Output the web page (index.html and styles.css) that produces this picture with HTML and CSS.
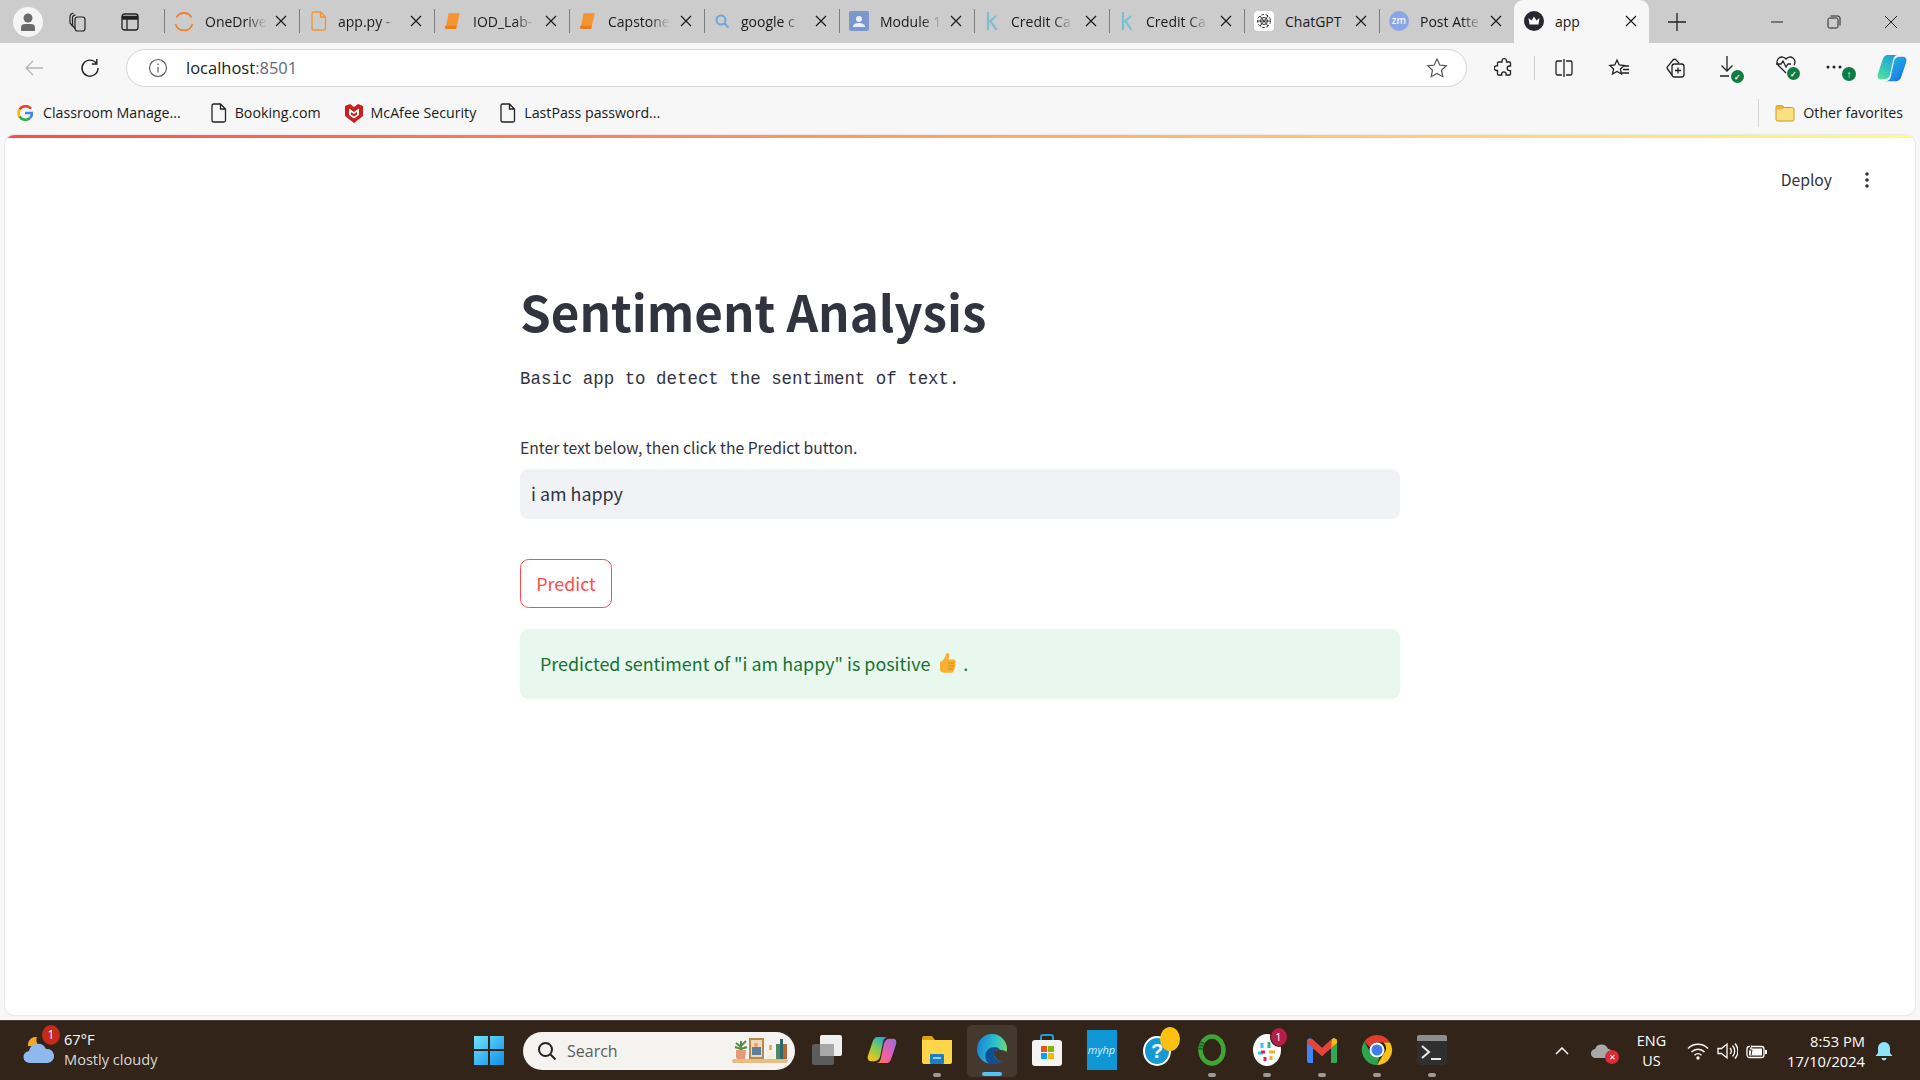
FILE: index.html
```html
<!DOCTYPE html>
<html lang="en">
<head>
    <meta charset="UTF-8">
    <title>app</title>
    <link rel="stylesheet" href="styles.css">
</head>
<body>
<svg class="defs" width="0" height="0">
    <symbol id="close" viewBox="0 0 12 12"><path d="M1 1l10 10M11 1L1 11" stroke="#1a1a1a" stroke-width="1.2" fill="none"/></symbol>
    <symbol id="doc" viewBox="0 0 16 20"><path d="M2.5 1h7l5 5v11.5a1.5 1.5 0 0 1-1.500 1.500h-10.500a1.500 1.500 0 0 1-1.500-1.500v-15a1.500 1.500 0 0 1 1.500-1.500zM9.500 1v5h5" fill="none" stroke="currentColor" stroke-width="1.300"/></symbol>
    <symbol id="book" viewBox="0 0 16 16"><path d="M4 1h10l-2.500 11H2z" fill="#f59331"/><path d="M2 12h9.500l-.6 3H2.500a1.500 1.500 0 0 1-.5-3z" fill="#e47f1d"/></symbol>
    <symbol id="kaggle" viewBox="0 0 16 20"><path d="M4 1v18M4 12l8-7M6.500 10l6 9" fill="none" stroke="#7dbdd0" stroke-width="2.200"/></symbol>
</svg>

<div class="tabstrip">
    <div class="strip_btn strip_profile">
        <span class="profile"><svg width="18" height="20" viewBox="0 0 18 20"><circle cx="9" cy="6" r="4.500" fill="#6a6a6a"/><path d="M2 19v-3a4 4 0 0 1 4-4h6a4 4 0 0 1 4 4v3z" fill="#6a6a6a"/></svg></span>
    </div>
    <div class="strip_btn strip_work">
        <svg width="20" height="20" viewBox="0 0 20 20" fill="none" stroke="#222" stroke-width="1.200"><rect x="8" y="5" width="10" height="14" rx="2.500"/><path d="M8 16.500l-2.500-3V5.500a2.500 2.500 0 0 1 3-2.300M5.500 14l-2.500-3V4.500a3 3 0 0 1 3.500-3"/></svg>
    </div>
    <div class="strip_btn strip_vert">
        <svg width="18" height="18" viewBox="0 0 18 18" fill="none" stroke="#222" stroke-width="1.300"><rect x="1" y="1" width="16" height="16" rx="2.500"/><path d="M1.500 3.500h15v2.500h-15z" fill="#222"/><path d="M6 6v11"/></svg>
    </div>

    <div class="tab">
        <svg class="tab_icon" width="20" height="20" viewBox="0 0 20 20" fill="none" stroke="#f2812d" stroke-width="1.800"><path d="M2.500 6.500A8.500 8.500 0 0 1 17.500 6.500"/><path d="M1.500 13A8.800 8.800 0 0 0 18.500 13"/></svg>
        <span class="tab_title">OneDrive</span>
        <svg class="tab_close"><use href="#close"/></svg>
    </div>
    <div class="tab">
        <svg class="tab_icon orange" width="16" height="20"><use href="#doc"/></svg>
        <span class="tab_title">app.py - </span>
        <svg class="tab_close"><use href="#close"/></svg>
    </div>
    <div class="tab">
        <svg class="tab_icon" width="18" height="18"><use href="#book"/></svg>
        <span class="tab_title">IOD_Lab-</span>
        <svg class="tab_close"><use href="#close"/></svg>
    </div>
    <div class="tab">
        <svg class="tab_icon" width="18" height="18"><use href="#book"/></svg>
        <span class="tab_title">Capstone</span>
        <svg class="tab_close"><use href="#close"/></svg>
    </div>
    <div class="tab">
        <svg class="tab_icon" width="16" height="16" viewBox="0 0 16 16" fill="none" stroke="#6ea6d8" stroke-width="2"><circle cx="7" cy="7" r="4.500"/><path d="M10.500 10.500L14.500 14.500"/></svg>
        <span class="tab_title">google c</span>
        <svg class="tab_close"><use href="#close"/></svg>
    </div>
    <div class="tab">
        <svg class="tab_icon" width="20" height="20" viewBox="0 0 20 20"><rect width="20" height="20" rx="2" fill="#7c97c9"/><circle cx="10" cy="8" r="3" fill="#e8eef8"/><path d="M4 16c0-3 3-4 6-4s6 1 6 4z" fill="#e8eef8"/></svg>
        <span class="tab_title">Module 1</span>
        <svg class="tab_close"><use href="#close"/></svg>
    </div>
    <div class="tab">
        <svg class="tab_icon" width="16" height="20"><use href="#kaggle"/></svg>
        <span class="tab_title">Credit Ca</span>
        <svg class="tab_close"><use href="#close"/></svg>
    </div>
    <div class="tab">
        <svg class="tab_icon" width="16" height="20"><use href="#kaggle"/></svg>
        <span class="tab_title">Credit Ca</span>
        <svg class="tab_close"><use href="#close"/></svg>
    </div>
    <div class="tab">
        <svg class="tab_icon" width="20" height="20" viewBox="0 0 20 20"><rect width="20" height="20" rx="4" fill="#fff"/><g fill="none" stroke="#333" stroke-width="1"><circle cx="10" cy="10" r="6.500" stroke-dasharray="3 1.500"/><circle cx="10" cy="10" r="3.500"/><path d="M6 5l8 10M14 5L6 15M3.500 10h13"/></g></svg>
        <span class="tab_title full">ChatGPT</span>
        <svg class="tab_close"><use href="#close"/></svg>
    </div>
    <div class="tab">
        <span class="zoom_icon">zm</span>
        <span class="tab_title">Post Atte</span>
        <svg class="tab_close"><use href="#close"/></svg>
    </div>
    <div class="tab tab_active">
        <svg class="tab_icon" width="20" height="20" viewBox="0 0 20 20"><circle cx="10" cy="10" r="10" fill="#262730"/><path d="M4.500 7l3 2.500L10 5.500l2.500 4 3-2.500-1 6.500h-9z" fill="#fff"/></svg>
        <span class="tab_title full">app</span>
        <svg class="tab_close"><use href="#close"/></svg>
    </div>
    <div class="new_tab">
        <svg width="18" height="18" viewBox="0 0 18 18"><path d="M9 0v18M0 9h18" stroke="#222" stroke-width="1.300"/></svg>
    </div>
    <div class="win_controls">
        <svg width="14" height="14" viewBox="0 0 14 14"><path d="M1 7h12" stroke="#222" stroke-width="1"/></svg>
        <svg width="14" height="14" viewBox="0 0 14 14" fill="none" stroke="#222"><rect x="1" y="3" width="10" height="10" rx="1.500"/><path d="M3.500 1H11a2 2 0 0 1 2 2v7.500"/></svg>
        <svg width="14" height="14" viewBox="0 0 14 14"><path d="M1 1l12 12M13 1L1 13" stroke="#222" stroke-width="1"/></svg>
    </div>
</div>

<div class="toolbar">
    <div class="nav_btn">
        <svg width="20" height="18" viewBox="0 0 20 18" fill="none" stroke="#b5b5b5" stroke-width="1.300"><path d="M19 9H2M9 2L2 9l7 7"/></svg>
    </div>
    <div class="nav_btn">
        <svg width="20" height="20" viewBox="0 0 20 20" fill="none" stroke="#222" stroke-width="1.400"><path d="M16.500 5.500A8 8 0 1 0 18 10"/><path d="M16.800 1v5h-5"/></svg>
    </div>
    <div class="address">
        <svg class="info" width="20" height="20" viewBox="0 0 20 20" fill="none" stroke="#555" stroke-width="1.100"><circle cx="10" cy="10" r="8.500"/><path d="M10 9v5.500M10 5.500v1.500"/></svg>
        <span class="url">localhost<span class="port">:8501</span></span>
        <svg class="addr_star" width="22" height="22" viewBox="0 0 22 22"><path d="M11 2l2.800 6 6.500.8-4.800 4.400 1.300 6.500L11 16.500l-5.800 3.200 1.300-6.500L1.700 8.800 8.200 8z" fill="none" stroke="#555" stroke-width="1.200"/></svg>
    </div>
    <div class="tools">
        <div class="tool"><svg width="20" height="20" viewBox="0 0 20 20" fill="none" stroke="#222" stroke-width="1.300"><path d="M8 2.500a2.300 2.300 0 0 1 4.500 0V4h3a1 1 0 0 1 1 1v3h-1a2.300 2.300 0 0 0 0 4.600h1v3.400a1 1 0 0 1-1 1h-3.400v-1a2.200 2.200 0 0 0-4.400 0v1H4.500a1 1 0 0 1-1-1v-3.500H2.500a2.300 2.300 0 0 1 0-4.600h1V5a1 1 0 0 1 1-1H8z"/></svg></div>
        <span class="tool_sep"></span>
        <div class="tool"><svg width="20" height="20" viewBox="0 0 20 20" fill="none" stroke="#222" stroke-width="1.300"><path d="M8 3H3.500A1.500 1.500 0 0 0 2 4.500v11A1.500 1.500 0 0 0 3.500 17H8M12 3h4.500A1.500 1.500 0 0 1 18 4.500v11a1.500 1.500 0 0 1-1.500 1.500H12M10 1v18"/></svg></div>
        <div class="tool"><svg width="22" height="20" viewBox="0 0 22 20" fill="none" stroke="#222" stroke-width="1.300"><path d="M9 2l2.200 5 5 .5-3.800 3.400 1.100 5.100L9 13.400 4.500 16l1.100-5.100L1.800 7.500l5-.5zM15 8h6M15 11.500h6M14 15h7"/></svg></div>
        <div class="tool"><svg width="22" height="22" viewBox="0 0 22 22" fill="none" stroke="#222" stroke-width="1.300"><rect x="8" y="7" width="12" height="13" rx="2.500"/><path d="M14 10.500v6M11 13.500h6M8 18l-4.500-6a2 2 0 0 1 .3-2.700L9 3a2 2 0 0 1 3-.1L15 6"/></svg></div>
        <div class="tool">
            <svg class="tool_dl" width="22" height="24" viewBox="0 0 22 24" fill="none" stroke="#222" stroke-width="1.300"><path d="M9 1v15M3.500 10.500L9 16l5.500-5.500M2 21h9"/></svg>
            <span class="ok_badge">&#10003;</span>
        </div>
        <div class="tool">
            <svg class="tool_health" width="22" height="20" viewBox="0 0 22 20" fill="none" stroke="#222" stroke-width="1.300"><path d="M11 18L3 10a5 5 0 0 1 8-6 5 5 0 0 1 8 6M1 9h5l2-3 3 6 2-3h3"/></svg>
            <span class="ok_badge ok_health">&#10003;</span>
        </div>
        <div class="tool">
            <svg class="tool_dots" width="16" height="4" viewBox="0 0 16 4"><circle cx="2" cy="2" r="1.500"/><circle cx="8" cy="2" r="1.500"/><circle cx="14" cy="2" r="1.500"/></svg>
            <span class="ok_badge up">&#8593;</span>
        </div>
        <div class="tool">
            <svg width="30" height="30" viewBox="0 0 32 30"><defs><linearGradient id="cp1" x1="0" y1="0" x2="1" y2="1"><stop offset="0" stop-color="#1ac0d8"/><stop offset="0.600" stop-color="#1f8ee8"/><stop offset="1" stop-color="#1a5fd0"/></linearGradient><linearGradient id="cp2" x1="0.800" y1="0" x2="0.200" y2="1"><stop offset="0" stop-color="#1a9be0"/><stop offset="1" stop-color="#4ce0a0"/></linearGradient></defs><path d="M11 1h12c-4 0-5 2-6 6l-3 15c-1 3-3 5-6 5H4c-3 0-4-3-3-6L6 6c1-3 3-5 5-5z" fill="url(#cp2)"/><path d="M21 29H9c4 0 5-2 6-6l3-15c1-3 3-5 6-5h4c3 0 4 3 3 6l-5 15c-1 3-3 5-5 5z" fill="url(#cp1)"/></svg>
        </div>
    </div>
</div>

<div class="bookmarks">
    <div class="bm">
        <svg width="16" height="16" viewBox="0 0 16 16" fill="none" stroke-width="2.600"><path d="M14 3.800A7 7 0 0 0 2.500 4.500" stroke="#ea4335"/><path d="M2.500 4.500a7 7 0 0 0 0 7" stroke="#fbbc05"/><path d="M2.500 11.500a7 7 0 0 0 10.500 1.500" stroke="#34a853"/><path d="M13 13a7 7 0 0 0 2-5H8" stroke="#4285f4"/></svg>
        <span>Classroom Manage...</span>
    </div>
    <div class="bm">
        <svg class="bm_doc" width="16" height="20"><use href="#doc"/></svg>
        <span>Booking.com</span>
    </div>
    <div class="bm">
        <svg width="18" height="20" viewBox="0 0 18 20"><path d="M0 3l5-2 4 3 4-3 5 2v10l-9 7-9-7z" fill="#c8201f"/><path d="M4 5.500l5 3.500 5-3.500v6.500l-5 3.500-5-3.500z" fill="#fff"/><path d="M6 9l3 2 3-2v2.500l-3 2-3-2z" fill="#c8201f"/></svg>
        <span>McAfee Security</span>
    </div>
    <div class="bm">
        <svg class="bm_doc" width="16" height="20"><use href="#doc"/></svg>
        <span>LastPass password...</span>
    </div>
    <div class="bm bm_other">
        <svg width="20" height="18" viewBox="0 0 20 18"><path d="M1 3a1.500 1.500 0 0 1 1.500-1.500h5l2 2h8A1.500 1.500 0 0 1 19 5v10.500a1.500 1.500 0 0 1-1.500 1.500h-15A1.500 1.500 0 0 1 1 15.500z" fill="#fbdf83" stroke="#c99a1e"/><path d="M1 3a1.500 1.500 0 0 1 1.500-1.500h5l2 2-2 2H1z" fill="#e9b83a"/></svg>
        <span>Other favorites</span>
    </div>
</div>

<div class="page">
    <div class="app_header">
        <span class="deploy">Deploy</span>
        <svg class="kebab" width="4" height="16" viewBox="0 0 4 16"><circle cx="2" cy="2" r="1.800"/><circle cx="2" cy="8" r="1.800"/><circle cx="2" cy="14" r="1.800"/></svg>
    </div>
    <div class="main">
        <h1>Sentiment Analysis</h1>
        <p class="subtitle">Basic app to detect the sentiment of text.</p>
        <label class="field_label">Enter text below, then click the Predict button.</label>
        <div class="text_input">i am happy</div>
        <button class="predict">Predict</button>
        <div class="alert">
            <span>Predicted sentiment of "i am happy" is positive</span>
            <svg class="thumb" width="19" height="22" viewBox="0 0 19 22"><path d="M3 10c3-1 5-4 6-8 .4-1.600 3-1.500 3.300.5.200 1.800-.3 3.500-1 5h5.200c2.600 0 2.800 3.200 1.500 4 1 1 .8 2.700-.3 3.300.6 1.200.1 2.500-1 3 .3 1.500-.7 3-2.500 3H8c-3 0-5-1-5-3z" fill="#fbb034"/><path d="M11 11h6M11 14h6M11 17h5" stroke="#d78a10" stroke-width="1"/></svg>
            <span>.</span>
        </div>
    </div>
</div>

<div class="taskbar">
    <div class="weather">
        <div class="weather_icon">
            <svg width="36" height="36" viewBox="0 0 36 36"><path d="M6 15a8 8 0 0 1 9-9 7 7 0 0 0 5 10z" fill="#f5a623"/><path d="M8 32a6 6 0 0 1-1-12 9 9 0 0 1 17-2 7 7 0 0 1 2 14z" fill="#8fb8ee"/></svg>
            <span class="weather_badge">1</span>
        </div>
        <div class="weather_text">
            <span class="temp">67°F</span>
            <span class="cond">Mostly cloudy</span>
        </div>
    </div>

    <div class="task_center">
        <div class="task_slot">
            <svg width="30" height="30" viewBox="0 0 30 30"><defs><linearGradient id="win" x1="0" y1="0" x2="1" y2="1"><stop offset="0" stop-color="#6fe3fb"/><stop offset="1" stop-color="#0f8fe8"/></linearGradient></defs><path d="M0 1h14v13H0zM16 1h14v13H16zM0 16h14v14H0zM16 16h14v14H16z" fill="url(#win)"/></svg>
        </div>
        <div class="search_pill">
            <svg width="20" height="20" viewBox="0 0 20 20" fill="none" stroke="#222" stroke-width="2"><circle cx="8.500" cy="8.500" r="6.500"/><path d="M13.500 13.500L18.500 18.500"/></svg>
            <span class="search_text">Search</span>
            <svg class="shelf" width="56" height="26" viewBox="0 0 56 26"><rect x="0" y="21" width="56" height="4" rx="2" fill="#e8bd84"/><path d="M4 12h10l-1 9H6a2 2 0 0 1-2-2z" fill="#e59a7a"/><path d="M9 12V3M9 9L4 5M9 8l5-5M9 11L3 9M9 11l6-2" stroke="#4f8f45" stroke-width="2" fill="none"/><rect x="17" y="0" width="15" height="21" fill="#b88a4e"/><rect x="19" y="2" width="11" height="17" fill="#f0d8b8"/><rect x="20" y="9" width="9" height="8" fill="#5c7f9c"/><circle cx="24" cy="7" r="2" fill="#ee9a5a"/><rect x="35" y="13" width="7" height="8" fill="#f7efe0"/><path d="M38.500 7v5" stroke="#f0a030" stroke-width="2.500"/><rect x="44" y="6" width="4" height="15" fill="#4d8a63"/><rect x="48" y="1" width="3" height="20" fill="#2c6a70"/><rect x="51" y="6" width="4" height="15" fill="#b0683a"/></svg>
        </div>
        <div class="task_slot">
            <svg width="32" height="32" viewBox="0 0 32 32"><rect x="1" y="10" width="22" height="21" rx="2" fill="#5c5c5c"/><rect x="9" y="1" width="22" height="21" rx="2" fill="#efefef"/><rect x="9" y="10" width="14" height="12" fill="#a8a8a8"/></svg>
        </div>
        <div class="task_slot">
            <svg width="30" height="28" viewBox="0 0 32 30"><defs><linearGradient id="cp3" x1="0.800" y1="0" x2="0.200" y2="1"><stop offset="0" stop-color="#1aa7e0"/><stop offset="0.500" stop-color="#7ecb5a"/><stop offset="1" stop-color="#f5c518"/></linearGradient><linearGradient id="cp4" x1="1" y1="0" x2="0" y2="1"><stop offset="0" stop-color="#9a6be0"/><stop offset="0.600" stop-color="#ef5fa7"/><stop offset="1" stop-color="#f6893b"/></linearGradient></defs><path d="M11 1h12c-4 0-5 2-6 6l-3 15c-1 3-3 5-6 5H4c-3 0-4-3-3-6L6 6c1-3 3-5 5-5z" fill="url(#cp3)"/><path d="M21 29H9c4 0 5-2 6-6l3-15c1-3 3-5 6-5h4c3 0 4 3 3 6l-5 15c-1 3-3 5-5 5z" fill="url(#cp4)"/></svg>
        </div>
        <div class="task_slot running">
            <svg width="32" height="30" viewBox="0 0 32 30"><path d="M1 3a2 2 0 0 1 2-2h8l3 4H1z" fill="#e0a300"/><path d="M1 5h30v22a2 2 0 0 1-2 2H3a2 2 0 0 1-2-2z" fill="#ffd54a"/><rect x="9" y="19" width="14" height="10" rx="1" fill="#1b7fc4"/><path d="M12 23h8" stroke="#bfe4ff" stroke-width="1.500"/></svg>
        </div>
        <div class="task_slot active">
            <svg width="32" height="32" viewBox="0 0 32 32"><defs><linearGradient id="edge" x1="0" y1="0.300" x2="1" y2="0.500"><stop offset="0" stop-color="#1a7fd8"/><stop offset="0.600" stop-color="#2cc4c8"/><stop offset="1" stop-color="#6edc6a"/></linearGradient></defs><circle cx="16" cy="16" r="15" fill="url(#edge)"/><path d="M18 19c2-3 8-3 13 0-.5 4-2 7-4 9-5 1-10-4-9-9z" fill="#45382e"/><path d="M27 27c-3 3-7 4-11 4l-3-2c4 1 10 1 14-2z" fill="#1a7fd8"/><path d="M13 31C8 27 8 18 14 15c4-2 9-1 10 2-2-1-5 0-6 3-1 4 3 8 8 8-3 2-8 4-13 3z" fill="#0f4f96"/></svg>
        </div>
        <div class="task_slot">
            <svg width="30" height="32" viewBox="0 0 30 32"><path d="M9 6V3a2 2 0 0 1 2-2h8a2 2 0 0 1 2 2v3" fill="none" stroke="#1ba0d8" stroke-width="2"/><rect x="0" y="6" width="30" height="26" rx="3" fill="#f4f4f4"/><rect x="9" y="12" width="6" height="6" fill="#f25022"/><rect x="16" y="12" width="6" height="6" fill="#7fba00"/><rect x="9" y="19" width="6" height="6" fill="#00a4ef"/><rect x="16" y="19" width="6" height="6" fill="#ffb900"/></svg>
        </div>
        <div class="task_slot">
            <span class="myhp">myhp</span>
        </div>
        <div class="task_slot">
            <div class="help_wrap">
                <svg width="30" height="34" viewBox="0 0 30 34"><ellipse cx="15" cy="18" rx="14" ry="15" fill="#fff"/><ellipse cx="15" cy="18" rx="12" ry="13" fill="#159ad6"/><text x="15" y="25" font-size="20" font-weight="700" text-anchor="middle" fill="#fff" font-family="Liberation Sans, sans-serif">?</text></svg>
                <span class="help_dot"></span>
            </div>
        </div>
        <div class="task_slot running_slot">
            <svg width="28" height="32" viewBox="0 0 28 32" fill="none"><ellipse cx="14" cy="16" rx="11.500" ry="13.500" stroke="#3fa535" stroke-width="4.500"/><path d="M5 8a12 14 0 0 0-2 8" stroke="#1a6a2c" stroke-width="4.500" stroke-dasharray="2 1"/></svg>
        </div>
        <div class="task_slot running_slot">
            <div class="help_wrap">
                <svg width="28" height="32" viewBox="0 0 28 32"><ellipse cx="14" cy="16" rx="14" ry="16" fill="#fff"/><path d="M9 9v5M5 19h5" stroke="#36c5f0" stroke-width="3"/><path d="M12 23v4M8 18h4" stroke="#e01e5a" stroke-width="3"/><path d="M16 8v6" stroke="#2eb67d" stroke-width="3"/><path d="M16 18h6M18 22v4" stroke="#ecb22e" stroke-width="3"/></svg>
                <span class="slack_badge">1</span>
            </div>
        </div>
        <div class="task_slot running_slot">
            <svg width="30" height="26" viewBox="0 0 30 26"><path d="M0 4a3 3 0 0 1 5-2l10 9 10-9a3 3 0 0 1 5 2v20a2 2 0 0 1-2 2h-4V11l-9 8-9-8v15H2a2 2 0 0 1-2-2z" fill="#4285f4"/><path d="M24 11l6-5v18a2 2 0 0 1-2 2h-4z" fill="#34a853"/><path d="M5 2l10 9 10-9 5 0v4l-15 13L0 6V4z" fill="#ea4335"/><path d="M25 2a3 3 0 0 1 5 2v2l-6 5z" fill="#fbbc04"/></svg>
        </div>
        <div class="task_slot running_slot">
            <svg width="32" height="32" viewBox="0 0 32 32"><path d="M16 1a15 15 0 0 1 13 7.500H16a7.500 7.500 0 0 0-7 5L3.500 7.500A15 15 0 0 1 16 1z" fill="#e33b2e"/><path d="M29 8.500A15 15 0 0 1 16 31l6.500-11a7.500 7.500 0 0 0 0-11.500z" fill="#fbc116"/><path d="M16 31A15 15 0 0 1 3.500 7.500L9.500 19a7.500 7.500 0 0 0 9 4z" fill="#2ea44f"/><circle cx="16" cy="16" r="7.500" fill="#fff"/><circle cx="16" cy="16" r="5.500" fill="#3f7ee8"/></svg>
        </div>
        <div class="task_slot running_slot">
            <svg width="30" height="30" viewBox="0 0 30 30"><rect width="30" height="30" rx="2" fill="#2f2f2f"/><path d="M0 2a2 2 0 0 1 2-2h26a2 2 0 0 1 2 2v4H0z" fill="#8d8d8d"/><path d="M5 11l7 6-7 6" fill="none" stroke="#e8e8e8" stroke-width="2"/><path d="M14 24h10" stroke="#e8e8e8" stroke-width="2"/></svg>
        </div>
    </div>

    <div class="tray">
        <svg width="14" height="8" viewBox="0 0 14 8" fill="none" stroke="#fff" stroke-width="1.500"><path d="M1 7l6-6 6 6"/></svg>
        <div class="tray_cloud">
            <svg width="22" height="14" viewBox="0 0 22 14"><path d="M5 14a4.500 4.500 0 0 1-1-9 7 7 0 0 1 13 0 4.500 4.500 0 0 1 0 9z" fill="#a9a9a9"/></svg>
            <span class="err_badge">&#10005;</span>
        </div>
        <div class="lang">ENG<br>US</div>
        <svg class="wifi" width="22" height="18" viewBox="0 0 22 18" fill="none" stroke="#fff" stroke-width="1.400"><path d="M1 6.500a14 14 0 0 1 20 0M4.500 10a9 9 0 0 1 13 0M7.500 13.200a5 5 0 0 1 7 0"/><circle cx="11" cy="16" r="1" fill="#fff"/></svg>
        <svg class="volume" width="21" height="18" viewBox="0 0 21 18" fill="none" stroke="#fff" stroke-width="1.300"><path d="M1 6.500h3.500L10 2v14l-5.500-4.500H1zM13 6a4 4 0 0 1 0 6M15.500 3.500a8 8 0 0 1 0 11M18 1.500a11 11 0 0 1 0 15"/></svg>
        <svg class="battery" width="22" height="16" viewBox="0 0 22 16"><rect x="1" y="3.500" width="17" height="11" rx="2.500" fill="none" stroke="#fff" stroke-width="1.300"/><rect x="3" y="5.500" width="13" height="7" fill="#fff"/><rect x="19" y="7" width="2" height="4" fill="#fff"/><path d="M6 0L3 7h3l-1 5" fill="#fff" stroke="#33241a"/></svg>
        <div class="clock">8:53 PM<br>17/10/2024</div>
        <svg class="bell" width="18" height="20" viewBox="0 0 18 20"><path d="M9 1a6 6 0 0 1 6 6v5l2.500 3h-17L3 12V7a6 6 0 0 1 6-6z" fill="#8de4fb"/><path d="M6.500 17a2.500 2.500 0 0 0 5 0z" fill="#8de4fb"/></svg>
    </div>
</div>
</body>
</html>
```

FILE: styles.css
```css
* {
    margin: 0;
    padding: 0;
    box-sizing: border-box;
}

html, body {
    height: 100%;
    overflow: hidden;
}

body {
    display: flex;
    flex-direction: column;
    background-color: #f7f7f7;
    font-family: "Open Sans", "Liberation Sans", sans-serif;
    color: #1a1a1a;
}

.defs {
    position: absolute;
}

/* browser tab strip */
.tabstrip {
    height: 43px;
    flex: none;
    display: flex;
    align-items: stretch;
    background-color: #cccccc;
}

.strip_btn {
    display: flex;
    align-items: center;
    justify-content: center;
    flex: none;
}

.strip_profile {
    width: 56px;
}

.strip_work {
    width: 42px;
}

.strip_vert {
    width: 66px;
    padding-right: 2px;
}

.profile {
    width: 30px;
    height: 30px;
    border-radius: 50%;
    background-color: #f5f5f5;
    display: flex;
    align-items: center;
    justify-content: center;
}

.tab {
    width: 135px;
    flex: none;
    display: flex;
    align-items: center;
    position: relative;
    padding: 0 12px 1px 10px;
    font-size: 14px;
}

.tab::before {
    content: "";
    position: absolute;
    left: 0;
    top: 9px;
    bottom: 10px;
    width: 1px;
    background-color: #7d7d7d;
}

.tab_icon, .zoom_icon {
    flex: none;
    margin-right: 10px;
}

.orange {
    color: #f59331;
    margin-left: 2px;
}

.zoom_icon {
    width: 20px;
    height: 20px;
    border-radius: 50%;
    background-color: #8aa6e6;
    color: #f0f4ff;
    font-size: 10px;
    font-weight: 600;
    text-align: center;
    line-height: 19px;
}

.tab_title {
    flex: 1;
    min-width: 0;
    margin-left: 1px;
    white-space: pre;
    -webkit-mask-image: linear-gradient(to right, #000 42px, transparent 62px);
    mask-image: linear-gradient(to right, #000 42px, transparent 62px);
}

.tab_title.full {
    -webkit-mask-image: none;
    mask-image: none;
}

.tab_close {
    width: 12px;
    height: 12px;
    flex: none;
}

.tab_active {
    background-color: #f7f7f7;
    border-radius: 9px 9px 0 0;
}

.tab_active::before {
    display: none;
}

.new_tab {
    width: 55px;
    display: flex;
    align-items: center;
    justify-content: center;
}

.win_controls {
    margin-left: auto;
    width: 172px;
    padding: 0 22px;
    display: flex;
    align-items: center;
    justify-content: space-between;
}

/* toolbar */
.toolbar {
    height: 49px;
    flex: none;
    display: flex;
    align-items: center;
    padding: 6px 0 5px 6px;
}

.nav_btn {
    width: 56px;
    display: flex;
    justify-content: center;
}

.nav_btn + .nav_btn {
    width: 56px;
    margin-right: 8px;
}

.address {
    width: 1341px;
    height: 38px;
    background-color: #ffffff;
    border: 1px solid #d6d6d6;
    border-radius: 19px;
    display: flex;
    align-items: center;
    padding: 0 18px 1px 21px;
    font-size: 16.500px;
}

.info {
    margin-right: 18px;
}

.url {
    flex: 1;
}

.port {
    color: #5f6b7a;
}

.tools {
    flex: 1;
    display: flex;
    align-items: center;
    padding-left: 14.500px;
}

.tool {
    width: 55.500px;
    height: 32px;
    display: flex;
    align-items: center;
    justify-content: center;
    position: relative;
    flex: none;
}

.tool:first-child {
    width: 45px;
}

.tool_sep {
    width: 1px;
    height: 24px;
    background-color: #cfcfcf;
    margin: 0 1px 0 7.500px;
}

.tool:last-child {
    width: 46px;
}

.tool_dl {
    margin-right: 3px;
    margin-top: -2px;
}

.tool_health {
    margin-top: -6px;
}

.tool_dots {
    fill: #222;
    margin: -2px 14px 0 0;
}

.ok_badge {
    position: absolute;
    right: 14px;
    bottom: 1px;
    width: 13px;
    height: 13px;
    border-radius: 50%;
    background-color: #107c41;
    color: #fff;
    font-size: 8px;
    font-weight: 700;
    line-height: 13px;
    text-align: center;
}

.ok_health {
    bottom: 4px;
}

.up {
    width: 14px;
    height: 14px;
    line-height: 14px;
    font-size: 10px;
    right: 13px;
    bottom: 3px;
}

/* favorites bar */
.bookmarks {
    height: 43px;
    flex: none;
    display: flex;
    align-items: center;
    padding: 0 0 2px 17px;
    font-size: 14.200px;
}

.bm {
    display: flex;
    align-items: center;
    gap: 8px;
    margin-right: 24px;
    white-space: nowrap;
}

.bm:first-child {
    margin-right: 30px;
    gap: 10px;
}

.bm_doc {
    color: #222;
}

.bm_other {
    margin: 0 17px 0 auto;
    padding-left: 16px;
    border-left: 1px solid #d6d6d6;
    height: 28px;
}

/* streamlit page */
.page {
    flex: 1;
    min-height: 0;
    margin: 0 5px 5px 5px;
    background-color: #ffffff;
    border-radius: 9px;
    overflow: hidden;
    font-family: "Noto Sans CJK SC", "Noto Sans", sans-serif;
    color: #31333f;
    box-shadow: 0 0 2px rgba(0, 0, 0, 0.18);
}

.page::before {
    content: "";
    display: block;
    height: 3px;
    background: linear-gradient(90deg, #ff4b4b, #fffd80);
}

.app_header {
    display: flex;
    justify-content: flex-end;
    align-items: center;
    height: 83px;
    padding-right: 46px;
    gap: 33px;
    font-size: 15.700px;
}

.kebab {
    fill: #31333f;
}

.main {
    width: 880px;
    margin: 0 auto;
}

h1 {
    font-size: 49.300px;
    font-weight: 700;
    line-height: 1.200;
    padding-top: 60px;
    margin-bottom: 25px;
}

.subtitle {
    font-family: "Liberation Mono", "DejaVu Sans Mono", monospace;
    font-size: 17.450px;
    font-weight: 400;
    line-height: 28px;
    margin-bottom: 44px;
}

.field_label {
    display: block;
    font-size: 15.700px;
    line-height: 22px;
    margin-bottom: 10px;
}

.text_input {
    height: 50px;
    background-color: #f0f2f6;
    border-radius: 8.800px;
    padding: 0 11px;
    font-size: 17.900px;
    line-height: 49px;
}

.predict {
    display: block;
    margin-top: 40px;
    width: 92px;
    height: 49px;
    padding-bottom: 2px;
    background-color: #ffffff;
    border: 1px solid #ff4b4b;
    border-radius: 8.800px;
    color: #ff4b4b;
    font-family: inherit;
    font-size: 17.900px;
}

.alert {
    margin-top: 21px;
    height: 70px;
    background-color: #e8f8ee;
    border-radius: 8.800px;
    padding: 0 20px 2px;
    display: flex;
    align-items: center;
    gap: 7px;
    font-size: 17.900px;
    color: #177233;
}

/* windows taskbar */
.taskbar {
    height: 60px;
    flex: none;
    display: flex;
    align-items: center;
    background-color: #33241a;
    border-top: 1px solid #4a4038;
    color: #ffffff;
}

.weather {
    width: 461px;
    flex: none;
    display: flex;
    align-items: center;
    gap: 6px;
    padding: 0 0 4px 22px;
}

.weather_icon {
    position: relative;
    width: 36px;
    height: 36px;
}

.weather_badge {
    position: absolute;
    top: -6px;
    right: -2px;
    width: 18px;
    height: 20px;
    border-radius: 50%;
    background-color: #c42b1c;
    font-size: 12px;
    text-align: center;
    line-height: 20px;
}

.weather_text {
    display: flex;
    flex-direction: column;
    font-size: 14.600px;
    line-height: 20px;
}

.cond {
    color: #dcd8d4;
}

.task_center {
    display: flex;
    align-items: center;
    height: 100%;
    flex: none;
}

.task_slot {
    width: 55px;
    height: 100%;
    display: flex;
    align-items: center;
    justify-content: center;
    position: relative;
    flex: none;
    padding-bottom: 2px;
}

.running::after, .running_slot::after {
    content: "";
    position: absolute;
    bottom: 3px;
    left: 50%;
    margin-left: -4px;
    width: 8px;
    height: 4px;
    border-radius: 2px;
    background-color: #9d9a97;
}

.active {
    background-color: #45382e;
    border-radius: 5px;
    height: 52px;
    width: 50px;
    margin: 0 2.500px;
    padding-bottom: 4px;
}

.active::after {
    content: "";
    position: absolute;
    bottom: 1px;
    left: 50%;
    margin-left: -10px;
    width: 20px;
    height: 4px;
    border-radius: 2px;
    background-color: #4fc3f7;
}

.search_pill {
    width: 272px;
    height: 38px;
    margin: 0 4px 0 7px;
    background-color: #f5f3f0;
    border-radius: 19px;
    display: flex;
    align-items: center;
    flex: none;
    padding: 0 7px 0 14px;
    color: #5c5c5c;
    font-size: 16px;
}

.search_text {
    flex: 1;
    margin-left: 10px;
}

.myhp {
    width: 30px;
    height: 40px;
    background-color: #0f96d6;
    color: #d8f0fb;
    font-size: 11px;
    font-style: italic;
    text-align: center;
    line-height: 40px;
}

.help_wrap {
    position: relative;
    display: flex;
}

.help_dot {
    position: absolute;
    top: -6px;
    right: -8px;
    width: 20px;
    height: 24px;
    border-radius: 50%;
    background-color: #fcc10f;
}

.slack_badge {
    position: absolute;
    top: -7px;
    right: -7px;
    width: 18px;
    height: 20px;
    border-radius: 50%;
    background-color: #b71c4a;
    border: 1px solid #33241a;
    font-size: 11px;
    text-align: center;
    line-height: 18px;
}

.tray {
    flex: 1;
    display: flex;
    align-items: center;
    padding-left: 96px;
}

.tray_cloud {
    position: relative;
    display: flex;
    margin-left: 22px;
}

.err_badge {
    position: absolute;
    right: -6px;
    bottom: -6px;
    width: 14px;
    height: 14px;
    border-radius: 50%;
    background-color: #d92b38;
    font-size: 8px;
    text-align: center;
    line-height: 14px;
}

.lang {
    width: 33px;
    margin-left: 22px;
    font-size: 14.400px;
    line-height: 20px;
    text-align: center;
}

.wifi {
    margin-left: 19px;
}

.volume, .battery {
    margin-left: 8px;
}

.clock {
    width: 78px;
    margin-left: 19px;
    font-size: 14.700px;
    line-height: 20px;
    text-align: right;
    white-space: nowrap;
}

.bell {
    margin-left: 10px;
}
```
